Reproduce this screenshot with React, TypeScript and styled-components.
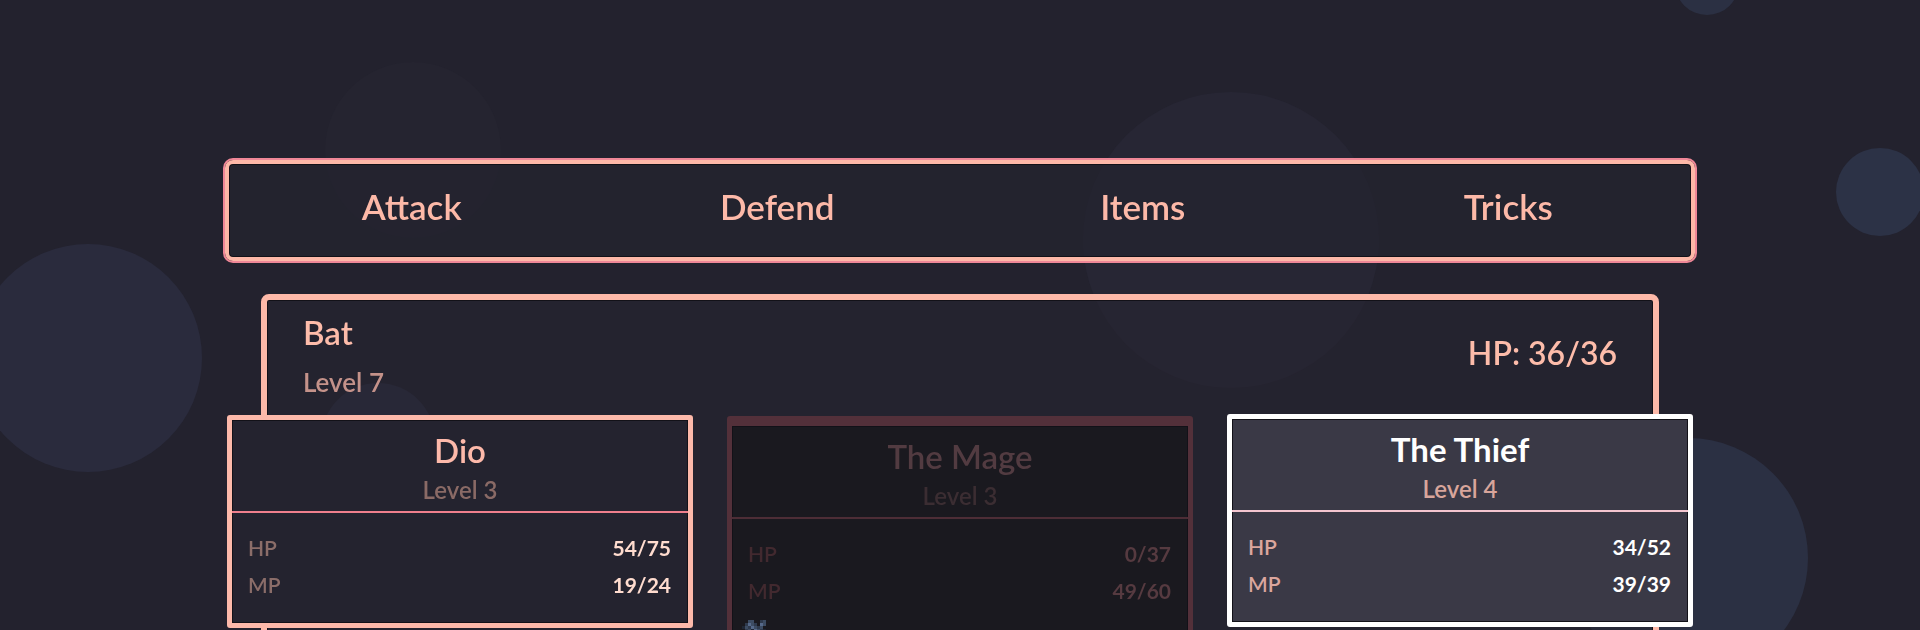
import styled, { createGlobalStyle } from 'styled-components';

type CardState = 'active' | 'fallen' | 'selected';

interface Hero {
  name: string;
  level: number;
  hp: string;
  mp: string;
  state: CardState;
}

const heroes: Hero[] = [
  { name: 'Dio', level: 3, hp: '54/75', mp: '19/24', state: 'active' },
  { name: 'The Mage', level: 3, hp: '0/37', mp: '49/60', state: 'fallen' },
  { name: 'The Thief', level: 4, hp: '34/52', mp: '39/39', state: 'selected' },
];

const actions = ['Attack', 'Defend', 'Items', 'Tricks'];

// background bubbles: centre x, centre y, radius, colour
const bubbles = [
  { x: 88, y: 358, r: 114, c: '#2a2b3d' },
  { x: 1880, y: 192, r: 44, c: '#2c3246' },
  { x: 1707, y: -17, r: 32, c: '#2b3043' },
  { x: 1231, y: 240, r: 148, c: '#272634' },
  { x: 413, y: 150, r: 88, c: '#252430' },
  { x: 378, y: 440, r: 57, c: '#2a2c3e' },
  { x: 1688, y: 558, r: 120, c: '#2b3043' },
];

const palette = {
  active: {
    border: '#fdb9aa',
    bg: '#24232f',
    name: '#fdb9aa',
    weight: 600,
    level: '#8a6a66',
    divider: '#ef7f8d',
    label: '#8b6d69',
    value: '#ffdccf',
  },
  fallen: {
    border: '#53303a',
    bg: '#1a191f',
    name: '#523b41',
    weight: 600,
    level: '#3b2d32',
    divider: '#4d2d36',
    label: '#42292f',
    value: '#563a40',
  },
  selected: {
    border: '#ffffff',
    bg: '#3a3946',
    name: '#ffffff',
    weight: 700,
    level: '#d8a59b',
    divider: '#f4c6d0',
    label: '#dba69d',
    value: '#ffffff',
  },
};

function Sprite() {
  // tiny pixel critter lying at the foot of the fallen card
  const px = [
    [2, 0, '#3d4c63'], [3, 0, '#3d4c63'], [6, 0, '#2f3a4d'], [7, 0, '#3d4c63'],
    [1, 1, '#2f3a4d'], [2, 1, '#56698a'], [3, 1, '#3d4c63'], [4, 1, '#2f3a4d'], [6, 1, '#56698a'], [7, 1, '#3d4c63'],
    [0, 2, '#1f2634'], [1, 2, '#3d4c63'], [2, 2, '#2f3a4d'], [3, 2, '#56698a'], [4, 2, '#3d4c63'], [5, 2, '#2f3a4d'], [6, 2, '#3d4c63'],
    [1, 3, '#2f3a4d'], [2, 3, '#3d4c63'], [3, 3, '#1f2634'], [4, 3, '#56698a'], [5, 3, '#3d4c63'], [6, 3, '#2f3a4d'], [7, 3, '#1f2634'],
    [2, 4, '#1f2634'], [3, 4, '#3d4c63'], [4, 4, '#2f3a4d'], [5, 4, '#56698a'], [6, 4, '#3d4c63'],
    [1, 5, '#2f3a4d'], [3, 5, '#1f2634'], [4, 5, '#3d4c63'], [6, 5, '#2f3a4d'],
  ] as const;
  return (
    <SpriteBox width="24" height="18" viewBox="0 0 8 6" shapeRendering="crispEdges">
      {px.map(([x, y, c], i) => (
        <rect key={i} x={x} y={y} width="1" height="1" fill={c} />
      ))}
    </SpriteBox>
  );
}

function App() {
  return (
    <>
      <GlobalStyle />
      <Backdrop>
        {bubbles.map((b, i) => (
          <Bubble key={i} $c={b.c} style={{ left: b.x - b.r, top: b.y - b.r, width: b.r * 2, height: b.r * 2 }} />
        ))}
      </Backdrop>

      <Main>
        <ActionMenu>
          {actions.map((a) => (
            <ActionItem key={a}>{a}</ActionItem>
          ))}
        </ActionMenu>

        <Battle>
          <EnemyRow>
            <EnemyInfo>
              <EnemyName>Bat</EnemyName>
              <EnemyLevel>Level 7</EnemyLevel>
            </EnemyInfo>
            <EnemyHp>HP: 36/36</EnemyHp>
          </EnemyRow>

          <PartyRow>
            {heroes.map((h) => (
              <HeroCard key={h.name} $state={h.state}>
                <CardHead $state={h.state}>
                  <HeroName $state={h.state}>{h.name}</HeroName>
                  <HeroLevel $state={h.state}>Level {h.level}</HeroLevel>
                </CardHead>
                <CardStats $state={h.state}>
                  <StatRow>
                    <StatLabel $state={h.state}>HP</StatLabel>
                    <StatValue $state={h.state}>{h.hp}</StatValue>
                  </StatRow>
                  <StatRow>
                    <StatLabel $state={h.state}>MP</StatLabel>
                    <StatValue $state={h.state}>{h.mp}</StatValue>
                  </StatRow>
                </CardStats>
                {h.state === 'fallen' && <Sprite />}
              </HeroCard>
            ))}
          </PartyRow>
        </Battle>
      </Main>
    </>
  );
}

export default App;

const GlobalStyle = createGlobalStyle`
  html, body {
    margin: 0;
    overflow: hidden;
    background: #23222e;
  }
  body {
    font-family: Lato, "Noto Sans", sans-serif;
  }
`;

const Backdrop = styled.div`
  position: fixed;
  inset: 0;
  overflow: hidden;
  z-index: 0;
`;

const Bubble = styled.div<{ $c: string }>`
  position: absolute;
  border-radius: 50%;
  background: ${(p) => p.$c};
`;

const Main = styled.div`
  position: relative;
  z-index: 1;
  width: 1474px;
  margin: 158px auto 0;
`;

const ActionMenu = styled.div`
  display: grid;
  grid-template-columns: repeat(4, 1fr);
  border: 2px solid #ef8797;
  border-radius: 10px;
  background: rgba(36, 35, 47, 0.7);
  box-shadow: inset 0 0 0 4px #fdb8a8, inset 0 0 0 5px #121118;
  padding: 4px;
`;

const ActionItem = styled.div`
  text-align: center;
  color: #fdb9a8;
  font-size: 35px;
  font-weight: 600;
  line-height: 1;
  padding: 25px 0 33px;
`;

const Battle = styled.div`
  margin: 31px 38px 0;
  border: 6px solid #fdb9a9;
  border-radius: 8px;
  background: rgba(37, 36, 48, 0.5);
  box-shadow: inset 0 0 0 1px #121118;
  padding-bottom: 40px;
`;

const EnemyRow = styled.div`
  display: flex;
  justify-content: space-between;
  align-items: center;
  padding: 16px 36px 0;
`;

const EnemyInfo = styled.div`
  display: flex;
  flex-direction: column;
  gap: 20px;
`;

const EnemyName = styled.div`
  color: #fdbcaa;
  font-size: 33px;
  font-weight: 600;
  line-height: 1;
`;

const EnemyLevel = styled.div`
  color: #c4928a;
  font-size: 26px;
  font-weight: 600;
  line-height: 1;
`;

const EnemyHp = styled.div`
  color: #fdbcaa;
  font-size: 32px;
  font-weight: 600;
  line-height: 1;
  margin-bottom: 5px;
`;

const PartyRow = styled.div`
  display: grid;
  grid-template-columns: repeat(3, 1fr);
  gap: 34px;
  margin: 20px -40px 0;
  align-items: start;
`;

const HeroCard = styled.div<{ $state: CardState }>`
  position: relative;
  border: 5px solid ${(p) => palette[p.$state].border};
  border-top-width: ${(p) => (p.$state === 'fallen' ? 10 : 5)}px;
  margin-top: ${(p) => (p.$state === 'fallen' ? 1 : p.$state === 'selected' ? -1 : 0)}px;
  border-radius: 3px;
  background: ${(p) => palette[p.$state].bg};
  box-shadow: inset 0 0 0 1px #121118;
`;

const CardHead = styled.div<{ $state: CardState }>`
  display: flex;
  flex-direction: column;
  align-items: center;
  gap: 11px;
  padding: 14px 0 9px;
  border-bottom: 2px solid ${(p) => palette[p.$state].divider};
`;

const HeroName = styled.div<{ $state: CardState }>`
  color: ${(p) => palette[p.$state].name};
  font-size: 33px;
  font-weight: ${(p) => palette[p.$state].weight};
  line-height: 1;
`;

const HeroLevel = styled.div<{ $state: CardState }>`
  color: ${(p) => palette[p.$state].level};
  font-size: 24px;
  font-weight: 600;
  line-height: 1;
`;

const CardStats = styled.div<{ $state: CardState }>`
  display: flex;
  flex-direction: column;
  gap: 16px;
  padding: 24px 17px ${(p) => (p.$state === 'fallen' ? 48 : 28)}px 16px;
`;

const StatRow = styled.div`
  display: flex;
  justify-content: space-between;
  align-items: baseline;
`;

const StatLabel = styled.span<{ $state: CardState }>`
  color: ${(p) => palette[p.$state].label};
  font-size: 21px;
  font-weight: 600;
  line-height: 1;
`;

const StatValue = styled.span<{ $state: CardState }>`
  color: ${(p) => palette[p.$state].value};
  font-size: 21px;
  font-weight: 700;
  line-height: 1;
`;

const SpriteBox = styled.svg`
  position: absolute;
  left: 10px;
  top: 194px;
`;
